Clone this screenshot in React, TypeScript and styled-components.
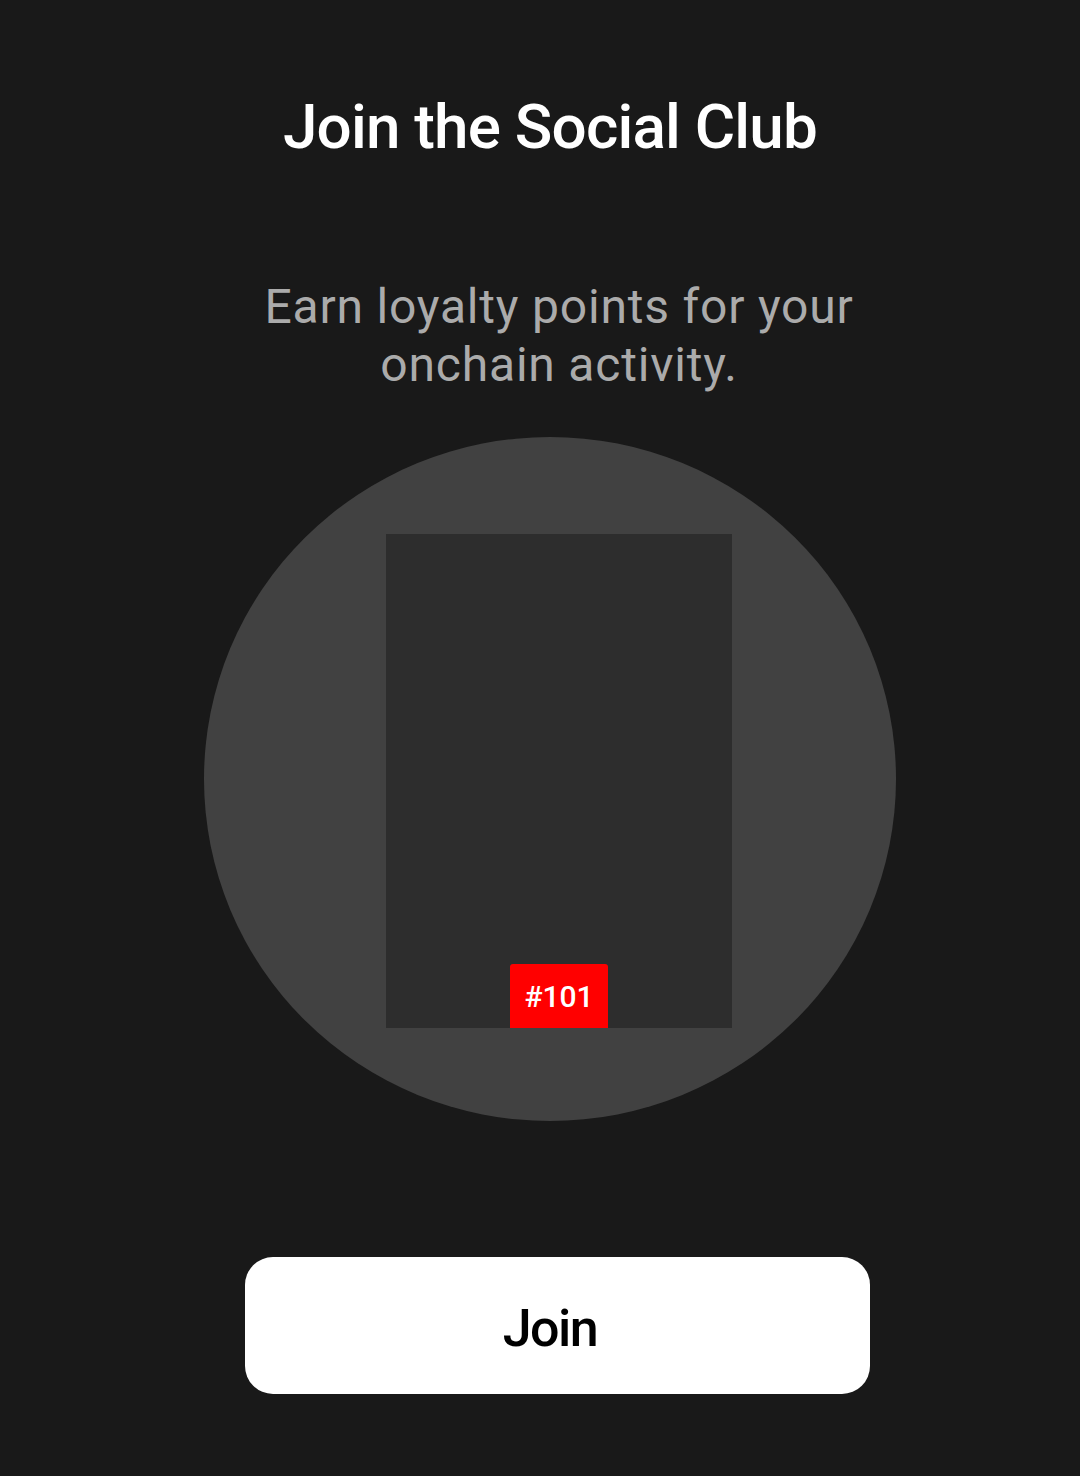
import React from "react";
import styled, { createGlobalStyle } from "styled-components";

const GlobalStyle = createGlobalStyle`
  html, body {
    margin: 0;
    padding: 0;
    background: #191919;
  }
  body {
    font-family: Roboto, "Noto Sans", "Liberation Sans", sans-serif;
  }
  * { box-sizing: border-box; }
`;

const Page = styled.main`
  min-height: 1476px;
  width: 1080px;
  background: #191919;
  display: flex;
  flex-direction: column;
  align-items: center;
  padding: 96px 0 0 20px;
`;

const Title = styled.h1`
  margin: 0;
  font-size: 62px;
  line-height: 62px;
  font-weight: 500;
  letter-spacing: -0.8px;
  color: #ffffff;
  text-align: center;
`;

const Subtitle = styled.p`
  margin: 120px 0 0 18px;
  width: 640px;
  font-size: 48px;
  line-height: 58px;
  font-weight: 400;
  letter-spacing: 0.8px;
  color: #ababab;
  text-align: center;
`;

const Disc = styled.div`
  margin-top: 43px;
  width: 692px;
  height: 684px;
  border-radius: 50%;
  background: #414141;
  display: flex;
  align-items: flex-start;
  justify-content: center;
  padding: 97px 0 0 18px;
`;

const Card = styled.div`
  width: 346px;
  height: 494px;
  background: #2d2d2d;
  display: flex;
  flex-direction: column;
  justify-content: flex-end;
  align-items: center;
`;

const Badge = styled.div`
  width: 98px;
  height: 64px;
  background: #ff0000;
  border-radius: 3px 3px 0 0;
  color: #ffffff;
  font-size: 30px;
  font-weight: 500;
  display: flex;
  align-items: center;
  justify-content: center;
`;

const JoinButton = styled.button`
  margin: 136px 0 0 15px;
  width: 625px;
  height: 137px;
  border: none;
  border-radius: 28px;
  background: #ffffff;
  color: #000000;
  font-family: inherit;
  font-size: 52px;
  font-weight: 500;
  letter-spacing: -1.5px;
  display: flex;
  align-items: center;
  justify-content: center;
  padding: 5px 15px 0 0;
  cursor: pointer;
`;

export default function App() {
  return (
    <>
      <GlobalStyle />
      <Page>
        <Title>Join the Social Club</Title>
        <Subtitle>Earn loyalty points for your onchain activity.</Subtitle>
        <Disc>
          <Card>
            <Badge>#101</Badge>
          </Card>
        </Disc>
        <JoinButton>Join</JoinButton>
      </Page>
    </>
  );
}
